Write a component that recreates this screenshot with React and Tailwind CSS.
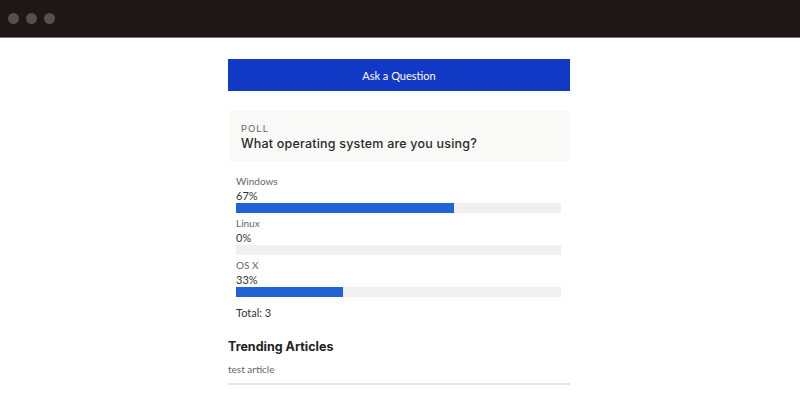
export default function App() {
  const options = [
    { label: "Windows", pct: 67 },
    { label: "Linux", pct: 0 },
    { label: "OS X", pct: 33 },
  ];
  return (
    <div className="w-[800px] h-[416px] bg-white overflow-hidden" style={{ fontFamily: "Lato, 'Liberation Sans', sans-serif" }}>
      <div className="h-[37px] bg-[#1f1616] flex items-center gap-[7px] pl-[8px] border-b border-[#7a7a7a] box-content">
        <span className="w-[11px] h-[11px] rounded-full bg-[#525050]" />
        <span className="w-[11px] h-[11px] rounded-full bg-[#525050]" />
        <span className="w-[11px] h-[11px] rounded-full bg-[#525050]" />
      </div>
      <div className="ml-[228px] w-[342px] pt-[21px]">
        <button className="w-full h-[32px] bg-[#1238c6] text-white text-[11px] flex items-center justify-center pt-[2px]">
          Ask a Question
        </button>
        <div className="mt-[20px] mx-[1px] h-[50px] bg-[#f9f9f8] pl-[12px] pt-[12px]" style={{ fontFamily: "Inter, 'Open Sans', sans-serif" }}>
          <div className="text-[9.5px] leading-[12px] tracking-[1px] text-[#666]">POLL</div>
          <div className="text-[12.5px] leading-[18px] font-medium text-[#2a2a2a] tracking-[0.2px]">What operating system are you using?</div>
        </div>
        <div className="pl-[8px] pr-[9px] pt-[13px]">
          {options.map((o) => (
            <div key={o.label} className="h-[42px]">
              <div className="text-[10px] leading-[14px] text-[#666]">{o.label}</div>
              <div className="text-[11px] leading-[14px] text-[#333] mt-[1px]">{o.pct}%</div>
              <div className="h-[10px] bg-[#f0f0f0]">
                <div className="h-full bg-[#2163d6]" style={{ width: `${o.pct}%` }} />
              </div>
            </div>
          ))}
          <div className="text-[11px] leading-[14px] text-[#333] mt-[6px]">Total: 3</div>
        </div>
        <div className="mt-[18px] text-[12.5px] leading-[18px] font-bold text-[#222]" style={{ fontFamily: "Inter, 'Open Sans', sans-serif" }}>
          Trending Articles
        </div>
        <div className="mt-[6px] text-[10px] leading-[14px] text-[#666]">test article</div>
        <div className="mt-[7px] h-[2px] bg-[#e5e5e5]" />
      </div>
    </div>
  );
}
